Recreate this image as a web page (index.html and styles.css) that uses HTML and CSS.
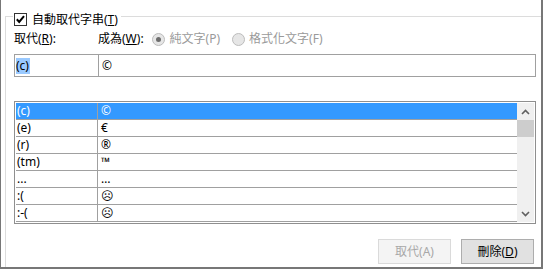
FILE: index.html
```
<!DOCTYPE html>
<html lang="zh-Hant">
<head>
<meta charset="utf-8">
<title>自動取代字串</title>
<link rel="stylesheet" href="styles.css">
</head>
<body>
<div class="dialog">
  <div class="group">
    <div class="group-head">
      <span class="checkbox"><svg width="13" height="13" viewBox="0 0 13 13"><path d="M2.8 6.3 L5.2 8.9 L10 3.2" fill="none" stroke="#000" stroke-width="2"/></svg></span>
      <span>自動取代字串(<u>T</u>)</span>
    </div>
    <div class="labels">
      <span class="lbl-replace">取代(<u>R</u>):</span>
      <span class="lbl-with">成為(<u>W</u>):</span>
      <span class="radio checked"></span><span class="dis">純文字(P)</span>
      <span class="radio second"></span><span class="dis">格式化文字(F)</span>
    </div>
    <div class="inputs">
      <div class="in-a"><span class="sel">(c)</span></div>
      <div class="in-b">©</div>
    </div>
    <div class="list">
      <div class="rows">
        <div class="row selected"><span class="c1">(c)</span><span class="c2">©</span></div>
        <div class="row"><span class="c1">(e)</span><span class="c2">€</span></div>
        <div class="row"><span class="c1">(r)</span><span class="c2">®</span></div>
        <div class="row"><span class="c1">(tm)</span><span class="c2">™</span></div>
        <div class="row"><span class="c1">...</span><span class="c2">…</span></div>
        <div class="row"><span class="c1">:(</span><span class="c2 face">☹</span></div>
        <div class="row"><span class="c1">:-(</span><span class="c2 face">☹</span></div>
      </div>
      <div class="scrollbar">
        <div class="sb-btn"><svg width="9" height="6" viewBox="0 0 9 6"><path d="M1 5 L4.5 1.5 L8 5" fill="none" stroke="#606060" stroke-width="1.6"/></svg></div>
        <div class="sb-thumb"></div>
        <div class="sb-track"></div>
        <div class="sb-btn"><svg width="9" height="6" viewBox="0 0 9 6"><path d="M1 1 L4.5 4.5 L8 1" fill="none" stroke="#606060" stroke-width="1.6"/></svg></div>
      </div>
    </div>
    <div class="buttons">
      <button class="btn disabled" type="button">取代(A)</button>
      <button class="btn" type="button">刪除(<u>D</u>)</button>
    </div>
  </div>
</div>
</body>
</html>
```
FILE: styles.css
```
html, body {
  margin: 0;
  padding: 0;
  background: #fff;
}
body {
  font-family: "Noto Sans", "Noto Sans CJK TC", sans-serif;
  font-size: 12px;
  line-height: 16px;
  color: #000;
}
.dialog {
  box-sizing: border-box;
  width: 543px;
  height: 269px;
  border-left: 1px solid #777;
  border-right: 2px solid #777;
  border-bottom: 2px solid #777;
  display: flex;
  flex-direction: column;
}
.group {
  flex: 1;
  margin: 16px 0 0 4px;
  border-top: 1px solid #dcdcdc;
  border-left: 1px solid #dcdcdc;
  padding: 0 5px 0 8px;
}
.group-head {
  display: flex;
  align-items: center;
  width: max-content;
  height: 15px;
  margin: -5px 0 0 -1px;
  padding: 0 3px 0 1px;
  background: #fff;
}
.checkbox {
  box-sizing: border-box;
  width: 13px;
  height: 13px;
  border: 1px solid #333;
  background: #fff;
  margin-right: 5px;
  display: flex;
  align-items: center;
  justify-content: center;
}
.checkbox svg {
  display: block;
  flex: none;
}
.labels {
  display: flex;
  align-items: center;
  height: 16px;
  margin-top: 4px;
}
.lbl-replace {
  width: 84px;
}
.lbl-with {
  margin-right: 8px;
}
.radio {
  box-sizing: border-box;
  width: 13px;
  height: 13px;
  border-radius: 50%;
  border: 1px solid #bcbcbc;
  background: #e6e6e6;
  margin-right: 5px;
  display: flex;
  align-items: center;
  justify-content: center;
}
.radio.checked::after {
  content: "";
  width: 5px;
  height: 5px;
  border-radius: 50%;
  background: #6d6d6d;
}
.radio.second {
  margin-left: 12px;
  margin-right: 4px;
}
.dis {
  color: #9a9a9a;
}
.inputs {
  box-sizing: border-box;
  display: flex;
  height: 23px;
  margin-top: 7px;
  border: 1px solid #a0a0a0;
}
.in-a {
  width: 82px;
  border-right: 1px solid #a0a0a0;
  padding-left: 1px;
  display: flex;
  align-items: center;
}
.sel {
  background: #99c9ff;
  padding: 0 1px 0 0;
}
.in-b {
  flex: 1;
  padding-left: 3px;
  display: flex;
  align-items: center;
}
.list {
  display: flex;
  margin-top: 24px;
  border: 1px solid #8f8f8f;
  padding: 1px;
}
.rows {
  flex: 1;
}
.row {
  display: flex;
  height: 16px;
  border-bottom: 1px solid #a0a0a0;
}
.row.selected {
  background: #3399ff;
  color: #fff;
}
.c1 {
  box-sizing: border-box;
  width: 82px;
  border-right: 1px solid #a0a0a0;
  padding-left: 1px;
}
.c2 {
  padding-left: 3px;
}
.face {
  font-family: "DejaVu Sans", sans-serif;
  font-size: 12px;
}
.scrollbar {
  width: 17px;
  background: #f0f0f0;
  display: flex;
  flex-direction: column;
}
.sb-btn {
  height: 17px;
  display: flex;
  align-items: center;
  justify-content: center;
}
.sb-btn svg {
  display: block;
}
.sb-thumb {
  height: 17px;
  background: #cdcdcd;
}
.sb-track {
  flex: 1;
}
.buttons {
  display: flex;
  justify-content: flex-end;
  gap: 10px;
  margin-top: 15px;
  padding-right: 2px;
}
.btn {
  box-sizing: border-box;
  width: 73px;
  height: 25px;
  margin: 0;
  padding: 0;
  font: inherit;
  color: #000;
  background: #e1e1e1;
  border: 1px solid #adadad;
  border-radius: 0;
}
.btn.disabled {
  background: #f4f4f4;
  border-color: #dadada;
  color: #a8a8a8;
}
```
